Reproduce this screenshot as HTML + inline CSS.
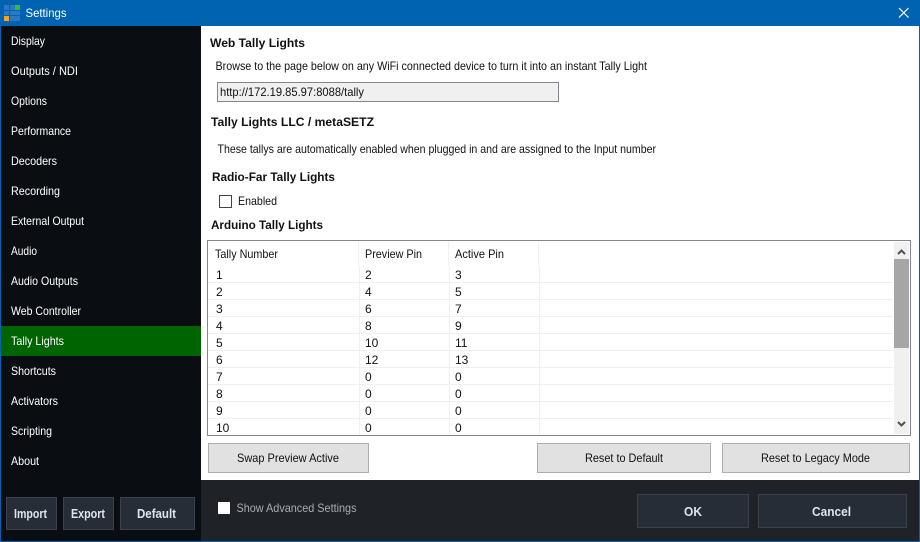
<!DOCTYPE html>
<html><head><meta charset="utf-8"><title>Settings</title>
<style>
html,body{margin:0;padding:0;background:#0063b1;width:920px;height:542px;overflow:hidden}
svg{display:block}
text{font-family:"Liberation Sans",sans-serif;font-size:12px;fill:#111;white-space:pre}
.s{fill:#fff}
.h{font-weight:bold;font-size:12px;fill:#111}
.b{font-weight:bold;font-size:12.5px;fill:#dfe5ec}
</style></head><body>
<svg width="920" height="542" viewBox="0 0 920 542" xmlns="http://www.w3.org/2000/svg" shape-rendering="crispEdges">
<rect width="920" height="542" fill="#0063b1"/>
<rect x="1" y="26" width="200" height="515" fill="#0a0e13"/>
<rect x="201" y="26" width="718" height="454" fill="#fff"/>
<rect x="201" y="480" width="718" height="61" fill="#1f2328"/>

<!-- title bar -->
<g>
<rect x="4" y="5" width="5" height="5" fill="#2a78c0"/><rect x="10" y="5" width="5" height="5" fill="#2a78c0"/><rect x="15" y="5" width="5" height="5" fill="#3cb54a"/>
<rect x="4" y="11" width="5" height="4" fill="#2a78c0"/><rect x="10" y="11" width="5" height="4" fill="#2a78c0"/><rect x="15" y="11" width="5" height="4" fill="#2a78c0"/>
<rect x="4" y="16" width="5" height="5" fill="#f9a31a"/><rect x="10" y="16" width="5" height="5" fill="#2a78c0"/><rect x="15" y="16" width="5" height="5" fill="#2a78c0"/>
</g>
<text class="s" x="25.5" y="17" textLength="41" lengthAdjust="spacingAndGlyphs">Settings</text>
<path d="M899 8L908.5 17.5M908.5 8L899 17.5" stroke="#fff" stroke-width="1.2" fill="none" shape-rendering="auto"/>

<!-- sidebar -->
<rect x="1" y="326" width="200" height="30" fill="#006400"/>
<text class="s" x="11" y="45" textLength="34" lengthAdjust="spacingAndGlyphs">Display</text>
<text class="s" x="11" y="75" textLength="67" lengthAdjust="spacingAndGlyphs">Outputs / NDI</text>
<text class="s" x="11" y="105" textLength="36" lengthAdjust="spacingAndGlyphs">Options</text>
<text class="s" x="11" y="135" textLength="60" lengthAdjust="spacingAndGlyphs">Performance</text>
<text class="s" x="11" y="165" textLength="46" lengthAdjust="spacingAndGlyphs">Decoders</text>
<text class="s" x="11" y="195" textLength="49" lengthAdjust="spacingAndGlyphs">Recording</text>
<text class="s" x="11" y="225" textLength="73" lengthAdjust="spacingAndGlyphs">External Output</text>
<text class="s" x="11" y="255" textLength="26" lengthAdjust="spacingAndGlyphs">Audio</text>
<text class="s" x="11" y="285" textLength="67" lengthAdjust="spacingAndGlyphs">Audio Outputs</text>
<text class="s" x="11" y="315" textLength="70" lengthAdjust="spacingAndGlyphs">Web Controller</text>
<text class="s" x="11" y="345" textLength="53" lengthAdjust="spacingAndGlyphs">Tally Lights</text>
<text class="s" x="11" y="375" textLength="45" lengthAdjust="spacingAndGlyphs">Shortcuts</text>
<text class="s" x="11" y="405" textLength="47" lengthAdjust="spacingAndGlyphs">Activators</text>
<text class="s" x="11" y="435" textLength="41" lengthAdjust="spacingAndGlyphs">Scripting</text>
<text class="s" x="11" y="465" textLength="28" lengthAdjust="spacingAndGlyphs">About</text>

<rect x="6.5" y="497.5" width="50" height="32" fill="#272d36" stroke="#3a424d"/>
<rect x="63.5" y="497.5" width="50" height="32" fill="#272d36" stroke="#3a424d"/>
<rect x="120.5" y="497.5" width="74" height="32" fill="#272d36" stroke="#3a424d"/>
<text class="b" x="14" y="518" textLength="33" lengthAdjust="spacingAndGlyphs">Import</text>
<text class="b" x="71" y="518" textLength="34" lengthAdjust="spacingAndGlyphs">Export</text>
<text class="b" x="137" y="518" textLength="39" lengthAdjust="spacingAndGlyphs">Default</text>

<!-- content -->
<text class="h" x="210" y="47" textLength="95" lengthAdjust="spacingAndGlyphs">Web Tally Lights</text>
<text x="215.5" y="70" textLength="431.5" lengthAdjust="spacingAndGlyphs">Browse to the page below on any WiFi connected device to turn it into an instant Tally Light</text>
<rect x="217.5" y="82.5" width="341" height="19" fill="#f0f0f0" stroke="#82878f"/>
<text x="220" y="96" textLength="144" lengthAdjust="spacingAndGlyphs">http://172.19.85.97:8088/tally</text>
<text class="h" x="211" y="126" textLength="163" lengthAdjust="spacingAndGlyphs">Tally Lights LLC / metaSETZ</text>
<text x="217.5" y="153" textLength="438.5" lengthAdjust="spacingAndGlyphs">These tallys are automatically enabled when plugged in and are assigned to the Input number</text>
<text class="h" x="212" y="181" textLength="123" lengthAdjust="spacingAndGlyphs">Radio-Far Tally Lights</text>
<rect x="219.5" y="195.5" width="12" height="12" fill="#fff" stroke="#444"/>
<text x="238" y="205" textLength="39" lengthAdjust="spacingAndGlyphs">Enabled</text>
<text class="h" x="211" y="229" textLength="112" lengthAdjust="spacingAndGlyphs">Arduino Tally Lights</text>

<!-- table -->
<rect x="207.5" y="240.5" width="703" height="195" fill="#fff" stroke="#82878f"/>
<g fill="#f0f0f0">
<rect x="358" y="242" width="1" height="24"/><rect x="448" y="242" width="1" height="24"/><rect x="538" y="242" width="1" height="24"/>
<rect x="359" y="266" width="1" height="169"/><rect x="449" y="266" width="1" height="169"/><rect x="539" y="266" width="1" height="169"/>
<rect x="208" y="282" width="685" height="1"/><rect x="208" y="299" width="685" height="1"/><rect x="208" y="316" width="685" height="1"/>
<rect x="208" y="333" width="685" height="1"/><rect x="208" y="350" width="685" height="1"/><rect x="208" y="367" width="685" height="1"/>
<rect x="208" y="384" width="685" height="1"/><rect x="208" y="401" width="685" height="1"/><rect x="208" y="418" width="685" height="1"/>
</g>
<text x="215" y="258" textLength="63" lengthAdjust="spacingAndGlyphs">Tally Number</text>
<text x="365" y="258" textLength="57" lengthAdjust="spacingAndGlyphs">Preview Pin</text>
<text x="455" y="258" textLength="49" lengthAdjust="spacingAndGlyphs">Active Pin</text>

<text x="216" y="279">1</text><text x="365" y="279">2</text><text x="455" y="279">3</text>
<text x="216" y="296">2</text><text x="365" y="296">4</text><text x="455" y="296">5</text>
<text x="216" y="313">3</text><text x="365" y="313">6</text><text x="455" y="313">7</text>
<text x="216" y="330">4</text><text x="365" y="330">8</text><text x="455" y="330">9</text>
<text x="216" y="347">5</text><text x="365" y="347">10</text><text x="455" y="347">11</text>
<text x="216" y="364">6</text><text x="365" y="364">12</text><text x="455" y="364">13</text>
<text x="216" y="381">7</text><text x="365" y="381">0</text><text x="455" y="381">0</text>
<text x="216" y="398">8</text><text x="365" y="398">0</text><text x="455" y="398">0</text>
<text x="216" y="415">9</text><text x="365" y="415">0</text><text x="455" y="415">0</text>
<text x="216" y="432">10</text><text x="365" y="432">0</text><text x="455" y="432">0</text>

<!-- scrollbar -->
<rect x="894" y="242" width="15" height="192" fill="#f0f0f0"/>
<rect x="894" y="259" width="15" height="89" fill="#a6a6a6"/>
<path d="M898 254L901.5 250.5L905 254" stroke="#505050" stroke-width="2" fill="none" shape-rendering="auto"/>
<path d="M898 422L901.5 425.5L905 422" stroke="#505050" stroke-width="2" fill="none" shape-rendering="auto"/>

<!-- buttons -->
<rect x="208.5" y="443.5" width="160" height="29" fill="#e1e1e1" stroke="#adadad"/>
<rect x="537.5" y="443.5" width="173" height="29" fill="#e1e1e1" stroke="#adadad"/>
<rect x="722.5" y="443.5" width="187" height="29" fill="#e1e1e1" stroke="#adadad"/>
<text x="237" y="462" textLength="102" lengthAdjust="spacingAndGlyphs">Swap Preview Active</text>
<text x="585" y="462" textLength="78" lengthAdjust="spacingAndGlyphs">Reset to Default</text>
<text x="761" y="462" textLength="109" lengthAdjust="spacingAndGlyphs">Reset to Legacy Mode</text>

<!-- footer -->
<rect x="218" y="502" width="12" height="12" fill="#fff"/>
<text x="236.5" y="512" textLength="120" lengthAdjust="spacingAndGlyphs" style="fill:#a9adb1">Show Advanced Settings</text>
<rect x="637.5" y="494.5" width="111" height="33" fill="#272d36" stroke="#3a424d"/>
<rect x="758.5" y="494.5" width="148" height="33" fill="#272d36" stroke="#3a424d"/>
<text class="b" x="684" y="516" textLength="18" lengthAdjust="spacingAndGlyphs">OK</text>
<text class="b" x="812" y="516" textLength="39" lengthAdjust="spacingAndGlyphs">Cancel</text>
</svg>
</body></html>
